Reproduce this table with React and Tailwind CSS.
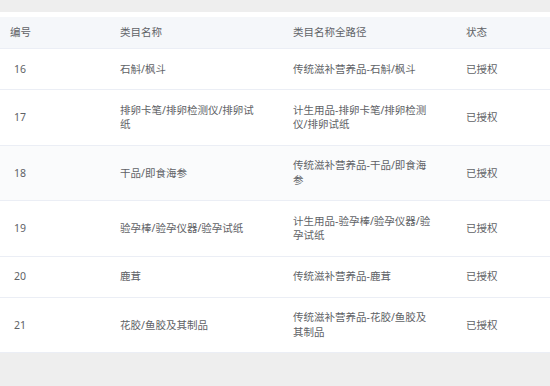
const rows = [
  { id: "16", name: "石斛/枫斗", path: "传统滋补营养品-石斛/枫斗" },
  { id: "17", name: "排卵卡笔/排卵检测仪/排卵试纸", path: "计生用品-排卵卡笔/排卵检测仪/排卵试纸" },
  { id: "18", name: "干品/即食海参", path: "传统滋补营养品-干品/即食海参", stripe: true },
  { id: "19", name: "验孕棒/验孕仪器/验孕试纸", path: "计生用品-验孕棒/验孕仪器/验孕试纸" },
  { id: "20", name: "鹿茸", path: "传统滋补营养品-鹿茸" },
  { id: "21", name: "花胶/鱼胶及其制品", path: "传统滋补营养品-花胶/鱼胶及其制品" },
];

export default function App() {
  return (
    <div
      className="w-[550px] h-[386px] bg-[#eeeeee] pt-[12px] text-[10.5px] text-[#606266]"
      style={{ fontFamily: '"Noto Sans", "Noto Sans CJK SC", sans-serif' }}
    >
      <div className="bg-white pt-[5px]">
        <div className="grid grid-cols-[110px_173px_173px_1fr] h-[32px] items-center bg-[#f5f7fa] text-[#606266] border-b border-[#ebeef5]">
          <div className="pl-[10px]">编号</div>
          <div className="pl-[10px]">类目名称</div>
          <div className="pl-[10px]">类目名称全路径</div>
          <div className="pl-[10px]">状态</div>
        </div>
        {rows.map((r) => (
          <div
            key={r.id}
            className={
              "grid grid-cols-[110px_173px_173px_1fr] items-center border-b border-[#ebeef5] leading-[14.5px] " +
              (r.stripe ? "bg-[#fafbfc]" : "bg-white")
            }
          >
            <div className="pl-[14px] py-[12.75px]">{r.id}</div>
            <div className="pl-[10px] py-[12.75px]">
              <div className="max-w-[142px]">{r.name}</div>
            </div>
            <div className="pl-[10px] py-[12.75px]">
              <div className="max-w-[142px]">{r.path}</div>
            </div>
            <div className="pl-[10px] py-[12.75px]">已授权</div>
          </div>
        ))}
      </div>
    </div>
  );
}
